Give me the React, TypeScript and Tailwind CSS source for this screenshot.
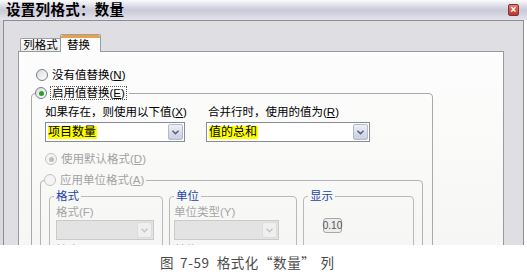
import type { ReactNode } from 'react';

const UI_FONT = "font-['Liberation_Sans','Noto_Sans_CJK_SC',sans-serif]";

function Radio({ checked = false, disabled = false }: { checked?: boolean; disabled?: boolean }) {
  return (
    <span
      className={`flex h-[12px] w-[12px] shrink-0 items-center justify-center rounded-full border ${
        disabled
          ? 'border-[#c4c4c4] bg-[#f4f4f4]'
          : 'border-[#6f7f95] bg-gradient-to-br from-[#dcdcd6] to-white'
      }`}
    >
      {checked && (
        <span
          className={`h-[5px] w-[5px] rounded-full ${disabled ? 'bg-[#bdbdbd]' : 'bg-[#2aa02a]'}`}
        />
      )}
    </span>
  );
}

function Chevron({ color }: { color: string }) {
  return (
    <svg width="7" height="5" viewBox="0 0 7 5" fill="none">
      <polyline points="0.5,0.8 3.5,3.8 6.5,0.8" stroke={color} strokeWidth="1.4" />
    </svg>
  );
}

function Select({
  value,
  width,
  disabled = false,
}: {
  value?: string;
  width: string;
  disabled?: boolean;
}) {
  return (
    <div
      className={`flex h-[20px] items-center border p-[1px] ${width} ${
        disabled ? 'border-[#cacaca] bg-[#e3e3e3]' : 'border-[#868c96] bg-white'
      }`}
    >
      <div className="flex h-full flex-1 items-center pl-[1px]">
        {value && (
          <span className="bg-[#ffff00] pr-[1px] text-[12px] leading-[13px] text-black">{value}</span>
        )}
      </div>
      <div
        className={`flex h-[16px] w-[15px] items-center justify-center rounded-[2px] border ${
          disabled
            ? 'border-[#dcdcdc] bg-[#efefef]'
            : 'border-[#b3bacb] bg-gradient-to-b from-[#eef0f6] to-[#c9cede]'
        }`}
      >
        <Chevron color={disabled ? '#c4c4c4' : '#4c5a78'} />
      </div>
    </div>
  );
}

function Group({
  legend,
  className,
  children,
}: {
  legend: ReactNode;
  className: string;
  children?: ReactNode;
}) {
  return (
    <fieldset className={`rounded-[4px] border border-[#b9b9b9] ${className}`}>
      <legend className="ml-[4px] px-[2px] text-[11.5px] leading-[14px] text-[#1d44a8]">{legend}</legend>
      {children}
    </fieldset>
  );
}

export default function App() {
  return (
    <div className={`h-[279px] w-[527px] overflow-hidden bg-white ${UI_FONT}`}>
      {/* window */}
      <div className="h-[245px] w-[527px] overflow-hidden">
        <div className="flex h-[20px] items-center justify-between bg-gradient-to-b from-[#fbfbfd] via-[#c9c9d8] to-[#e4e4ec] pl-[6px] pr-[8px]">
          <span className="text-[14.5px] font-bold leading-[16px] tracking-[0.3px] text-black">
            设置列格式：数量
          </span>
          <span className="flex h-[12px] w-[11px] items-center justify-center rounded-[2px] border border-[#8e2e2e] bg-gradient-to-b from-[#e07c6c] to-[#b5372f] text-[10px] font-bold leading-none text-white">
            ×
          </span>
        </div>

        <div className="flex w-[524px]">
          <div className="h-[225px] w-[3px] bg-[#dadade]" />
          <div className="h-[225px] flex-1 overflow-hidden border-x border-t border-[#8d8d92] bg-[#dfdfe3]">
            {/* tabs */}
            <div className="ml-[16px] mt-[13px] flex items-end text-[11.5px] leading-[13px]">
              <div className="flex h-[13px] w-[41px] items-center justify-center rounded-t-[2px] border border-b-0 border-[#97a0a3] bg-gradient-to-b from-white to-[#e9e9e6] text-black">
                列格式
              </div>
              <div className="relative z-10 -mb-[1px] -ml-[1px] flex h-[18px] w-[41px] flex-col rounded-t-[2px] border border-b-0 border-[#97a0a3] bg-[#fcfcfc]">
                <div className="h-[3px] rounded-t-[2px] bg-[#eaa04a]" />
                <div className="flex flex-1 items-center pl-[6px] text-black">替换</div>
              </div>
            </div>

            {/* panel */}
            <div className="ml-[14px] h-[200px] w-[486px] border border-b-0 border-[#959ca0] bg-gradient-to-b from-[#fdfdfd] to-[#f6f6f4] text-[11.5px] leading-[14px]">
              <div className="ml-[17px] mt-[16px] flex h-[14px] items-center gap-[4px] text-black">
                <Radio />
                <span>没有值替换(<span className="underline">N</span>)</span>
              </div>

              <fieldset className="ml-[12px] mt-[3px] h-[170px] w-[402px] rounded-[4px] border border-[#a9a9a9]">
                <legend className="ml-[3px] flex h-[16px] items-center gap-[3px] pr-[2px] text-black">
                  <Radio checked />
                  <span className="border border-dotted border-[#555] px-[1px] leading-[12px]">
                    启用值替换(<span className="underline">E</span>)
                  </span>
                </legend>

                <div className="pl-[13px]">
                  <div className="mt-[4px] flex gap-[21px]">
                    <div className="flex w-[140px] flex-col gap-[3px]">
                      <span className="h-[14px] whitespace-nowrap text-black">
                        如果存在，则使用以下值(<span className="underline">X</span>)
                      </span>
                      <Select value="项目数量" width="w-[140px]" />
                    </div>
                    <div className="flex w-[164px] flex-col gap-[3px]">
                      <span className="h-[14px] whitespace-nowrap pl-[2px] text-black">
                        合并行时，使用的值为(<span className="underline">R</span>)
                      </span>
                      <Select value="值的总和" width="w-[164px]" />
                    </div>
                  </div>

                  <div className="mt-[10px] flex h-[14px] items-center gap-[4px] text-[#a3a3a3]">
                    <Radio checked disabled />
                    <span>使用默认格式(<span className="underline">D</span>)</span>
                  </div>
                </div>

                <fieldset className="ml-[8px] mt-[6px] h-[90px] w-[383px] rounded-[4px] border border-[#b3b3b3]">
                  <legend className="ml-[3px] flex h-[16px] items-center gap-[4px] pr-[2px] text-[#a3a3a3]">
                    <Radio disabled />
                    <span>应用单位格式(<span className="underline">A</span>)</span>
                  </legend>

                  <div className="mt-[1px] flex gap-[6px] pl-[8px]">
                    <Group legend="格式" className="h-[70px] w-[114px]">
                      <div className="flex flex-col pl-[6px] text-[#a6a6a6]">
                        <span className="mt-[2px] h-[14px]">格式(F)</span>
                        <div className="mt-[1px]">
                          <Select disabled width="w-[98px]" />
                        </div>
                        <span className="mt-[3px] h-[14px]">精度(P)</span>
                      </div>
                    </Group>
                    <Group legend="单位" className="h-[70px] w-[128px]">
                      <div className="flex flex-col pl-[4px] text-[#a6a6a6]">
                        <span className="mt-[2px] h-[14px]">单位类型(Y)</span>
                        <div className="mt-[1px]">
                          <Select disabled width="w-[105px]" />
                        </div>
                        <span className="mt-[3px] h-[14px]">单位(U)</span>
                      </div>
                    </Group>
                    <Group legend="显示" className="h-[70px] w-[111px]">
                      <div className="pl-[19px] pt-[15px]">
                        <div className="flex h-[15px] w-[19px] items-center justify-center rounded-[3px] border border-[#a8a8a8] bg-[#ededed] text-[10px] leading-none text-[#555]">
                          0.10
                        </div>
                      </div>
                    </Group>
                  </div>
                </fieldset>
              </fieldset>
            </div>
          </div>
        </div>
      </div>

      {/* caption */}
      <div className="flex items-center pl-[160px] pt-[9px] font-['Noto_Sans_CJK_SC',sans-serif] text-[13.5px] leading-[16px] tracking-[0.6px] text-[#4a4a4a]">
        <span>图</span>
        <span className="ml-[6px]">7-59</span>
        <span className="ml-[7px]">格式化“数量”</span>
        <span className="ml-[5px]">列</span>
      </div>
    </div>
  );
}
